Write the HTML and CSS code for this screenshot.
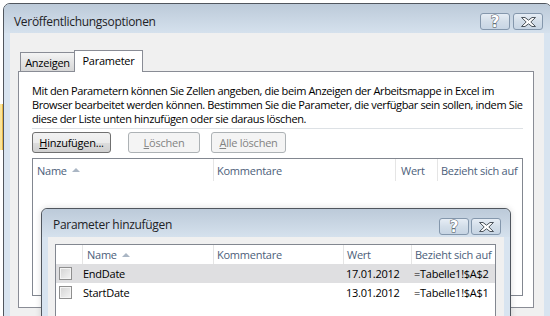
FILE: index.html
```html
<!DOCTYPE html>
<html lang="de">
<head>
    <meta charset="UTF-8">
    <title>Veröffentlichungsoptionen</title>
    <link rel="stylesheet" href="styles.css">
</head>
<body>
    <div class="desk">
        <div class="cell-mark"></div>

        <div class="window main">
            <div class="titlebar">
                <span class="title">Veröffentlichungsoptionen</span>
                <div class="caps">
                    <div class="cap">
                        <svg width="14" height="15" viewBox="0 0 14 15"><text x="7" y="13" text-anchor="middle" class="q">?</text></svg>
                    </div>
                    <div class="cap">
                        <svg width="17" height="12" viewBox="0 0 17 12"><polygon points="1.5,1.5 5,1.5 8.5,4.2 12,1.5 15.5,1.5 10.8,6 15.5,10.5 12,10.5 8.5,7.8 5,10.5 1.5,10.5 6.2,6" class="x"/></svg>
                    </div>
                </div>
            </div>
            <div class="client">
                <div class="tabs">
                    <div class="tab">Anzeigen</div>
                    <div class="tab active">Parameter</div>
                </div>
                <div class="panel">
                    <p class="intro">Mit den Parametern können Sie Zellen angeben, die beim Anzeigen der Arbeitsmappe in Excel im<br>Browser bearbeitet werden können. Bestimmen Sie die Parameter, die verfügbar sein sollen, indem Sie<br>diese der Liste unten hinzufügen oder sie daraus löschen.</p>
                    <div class="sep"></div>
                    <div class="btn-row">
                        <button class="btn btn-add"><u>H</u>inzufügen...</button>
                        <button class="btn btn-del" disabled><u>L</u>öschen</button>
                        <button class="btn btn-clear" disabled><u>A</u>lle löschen</button>
                    </div>
                    <div class="list list-main">
                        <div class="list-head">
                            <div class="col">Name <span class="sort"></span></div>
                            <div class="col">Kommentare</div>
                            <div class="col col-wert">Wert</div>
                            <div class="col">Bezieht sich auf</div>
                        </div>
                    </div>
                </div>
            </div>
        </div>

        <div class="window sub">
            <div class="titlebar">
                <span class="title">Parameter hinzufügen</span>
                <div class="caps">
                    <div class="cap">
                        <svg width="14" height="15" viewBox="0 0 14 15"><text x="7" y="13" text-anchor="middle" class="q">?</text></svg>
                    </div>
                    <div class="cap">
                        <svg width="17" height="12" viewBox="0 0 17 12"><polygon points="1.5,1.5 5,1.5 8.5,4.2 12,1.5 15.5,1.5 10.8,6 15.5,10.5 12,10.5 8.5,7.8 5,10.5 1.5,10.5 6.2,6" class="x"/></svg>
                    </div>
                </div>
            </div>
            <div class="client">
                <div class="list list-sub">
                    <div class="list-head">
                        <div class="col"></div>
                        <div class="col">Name <span class="sort"></span></div>
                        <div class="col">Kommentare</div>
                        <div class="col">Wert</div>
                        <div class="col">Bezieht sich auf</div>
                    </div>
                    <div class="row selected">
                        <div class="cell"><span class="check"></span></div>
                        <div class="cell">EndDate</div>
                        <div class="cell"></div>
                        <div class="cell">17.01.2012</div>
                        <div class="cell">=Tabelle1!$A$2</div>
                    </div>
                    <div class="row">
                        <div class="cell"><span class="check"></span></div>
                        <div class="cell">StartDate</div>
                        <div class="cell"></div>
                        <div class="cell">13.01.2012</div>
                        <div class="cell">=Tabelle1!$A$1</div>
                    </div>
                </div>
            </div>
        </div>
    </div>
</body>
</html>
```

FILE: styles.css
```css
* {
    box-sizing: border-box;
}

body {
    margin: 0;
    background: #fff;
    font-family: "Open Sans", sans-serif;
    font-size: 11px;
    letter-spacing: -0.25px;
    color: #000;
}

.desk {
    position: relative;
    width: 550px;
    height: 316px;
    overflow: hidden;
}

/* bit of the excel selection behind the dialog */
.cell-mark {
    position: absolute;
    left: 0;
    top: 104px;
    width: 3px;
    height: 46px;
    background: #fbe59a;
    border-right: 1px solid #e9b949;
}

/* window chrome */
.window {
    border: 1px solid #50565e;
    background: #d8e4f0;
    display: flex;
    flex-direction: column;
}

.main {
    margin: 3px 0 0 3px;
    width: 549px;
    height: 330px;
    border-radius: 7px 7px 0 0;
}

.sub {
    position: absolute;
    left: 41px;
    top: 208px;
    width: 470px;
    height: 130px;
    border-radius: 6px 6px 0 0;
    box-shadow: 0 0 6px rgba(0, 0, 0, 0.15);
}

.titlebar {
    flex: none;
    height: 29px;
    display: flex;
    align-items: flex-start;
    background: linear-gradient(#bccad9, #d5e1ed);
    border-radius: 6px 6px 0 0;
}

.sub .titlebar {
    height: 28px;
}

.title {
    padding: 10px 0 0 10px;
    font-size: 12px;
    letter-spacing: -0.3px;
    line-height: 16px;
    color: #1e2226;
}

.sub .title {
    padding: 8px 0 0 11px;
}

.caps {
    display: flex;
    gap: 3px;
    margin: 9px 8px 0 auto;
}

.sub .caps {
    gap: 2px;
    margin: 9px 9px 0 auto;
}

.cap {
    width: 30px;
    height: 17px;
    border: 1px solid #8497ac;
    border-radius: 3px;
    background: linear-gradient(#e6edf5, #d3dee9 50%, #c7d5e4);
    display: flex;
    align-items: center;
    justify-content: center;
}

.cap svg {
    overflow: visible;
}

.cap .q {
    font-family: "DejaVu Sans", sans-serif;
    font-weight: bold;
    font-size: 15px;
    letter-spacing: 0;
    fill: #fff;
    stroke: #4c545c;
    stroke-width: 1;
    paint-order: stroke;
}

.cap .x {
    fill: #fff;
    stroke: #4c545c;
    stroke-width: 1;
    stroke-linejoin: round;
}

.client {
    flex: 1;
    background: #f0f0f0;
    margin: 0 7px 0 6px;
    padding: 17px 10px 0 8px;
}

.sub .client {
    margin: 0 6px;
    padding: 7px 8px 0 7px;
}

/* tabs */
.tabs {
    display: flex;
    align-items: flex-end;
    height: 21px;
    padding-left: 2px;
}

.tab {
    width: 55px;
    height: 19px;
    border: 1px solid #898c95;
    border-bottom: none;
    background: linear-gradient(#f4f4f4, #e5e5e5 50%, #d7d7d7);
    display: flex;
    align-items: center;
    justify-content: center;
    padding-top: 1px;
}

.tab.active {
    width: 69px;
    height: 22px;
    margin-left: -1px;
    margin-bottom: -1px;
    background: #fff;
    position: relative;
    z-index: 1;
    padding-top: 0;
    padding-bottom: 2px;
}

.panel {
    height: 237px;
    border: 1px solid #898c95;
    background: #fff;
    padding: 12px 0 0 13px;
}

.intro {
    margin: 0;
    line-height: 14px;
    letter-spacing: -0.37px;
    white-space: nowrap;
}

.sep {
    width: 491px;
    height: 1px;
    margin-top: 2px;
    background: #dde1e5;
}

/* buttons */
.btn-row {
    display: flex;
    margin-top: 3px;
}

.btn {
    height: 21px;
    padding: 0;
    font-family: inherit;
    font-size: 11px;
    letter-spacing: inherit;
    color: #000;
    border: 1px solid #707070;
    border-radius: 3px;
    background: linear-gradient(#f2f2f2, #ebebeb 50%, #dddddd 51%, #cfcfcf);
}

.btn:disabled {
    color: #838383;
    border-color: #adb2b5;
    background: #f4f4f4;
}

.btn-add {
    width: 79px;
}

.btn-del {
    width: 72px;
    margin-left: 17px;
}

.btn-clear {
    width: 75px;
    margin-left: 11px;
}

/* list views */
.list {
    border: 1px solid #828790;
    background: #fff;
}

.list-main {
    width: 491px;
    height: 138px;
    margin-top: 5px;
}

.list-sub {
    width: 441px;
    height: 90px;
}

.list-head,
.row {
    display: grid;
}

.list-main .list-head {
    grid-template-columns: 181px 182px 42px 84px;
    height: 22px;
}

.list-sub .list-head,
.list-sub .row {
    grid-template-columns: 27px 131px 130px 68px 83px;
}

.list-sub .list-head {
    height: 19px;
}

.col {
    display: flex;
    align-items: center;
    padding-left: 3px;
    color: #4c607a;
    border-right: 1px solid #e5e5e5;
    white-space: nowrap;
}

.col:last-child {
    border-right: none;
}

.list-main .col:first-child {
    padding-left: 4px;
}

.list-main .col-wert {
    padding-left: 5px;
}

.list-sub .col:nth-child(2) {
    padding-left: 4px;
}

.sort {
    width: 0;
    height: 0;
    margin-left: 5px;
    border-left: 4px solid transparent;
    border-right: 4px solid transparent;
    border-bottom: 4px solid #aab6c4;
}

.row {
    height: 19px;
}

.row.selected {
    background: #dfdfe1;
}

.cell {
    display: flex;
    align-items: center;
    padding-left: 2px;
    white-space: nowrap;
}

.cell:nth-child(1) {
    padding-left: 3px;
}

.cell:nth-child(2) {
    padding-left: 0;
}

.check {
    width: 13px;
    height: 13px;
    border: 1px solid #8f8f8f;
    background: linear-gradient(135deg, #d3d3d3, #f4f4f4);
    box-shadow: inset 0 0 0 1px #f4f4f4;
}
```
